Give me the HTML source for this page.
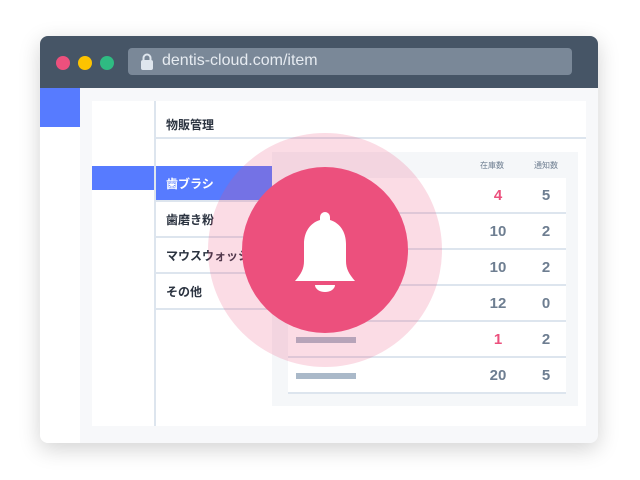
<!DOCTYPE html>
<html><head><meta charset="utf-8"><style>
*{margin:0;padding:0;box-sizing:border-box}
body{width:640px;height:480px;background:#fff;position:relative;overflow:hidden;font-family:"Liberation Sans","Noto Sans CJK JP",sans-serif}
.a{position:absolute}
.win{left:40px;top:36px;width:558px;height:407px;border-radius:8px;overflow:hidden;box-shadow:0 6px 22px rgba(0,0,0,.18);background:#f7f8fa}
.t{font-size:12px;font-weight:bold;color:#2b3340}
.sep{height:2px;background:#dde5ee}
.n{font-size:15px;font-weight:bold;color:#6e7e91;width:40px;text-align:center}
</style></head><body>
<div class="a win">
 <div class="a" style="left:0;top:0;width:558px;height:52px;background:#465566"></div>
 <div class="a" style="left:16px;top:20px;width:14px;height:14px;border-radius:50%;background:#ec507d"></div>
 <div class="a" style="left:38px;top:20px;width:14px;height:14px;border-radius:50%;background:#fdc300"></div>
 <div class="a" style="left:60px;top:20px;width:14px;height:14px;border-radius:50%;background:#2fbb82"></div>
 <div class="a" style="left:88px;top:12px;width:444px;height:27px;border-radius:4px;background:#7a8898"></div>
 <svg class="a" style="left:100px;top:17px" width="14" height="17" viewBox="0 0 14 17"><path d="M3.5 7V5a3.5 3.5 0 0 1 7 0v2" fill="none" stroke="#dfe6ee" stroke-width="2"/><rect x="1" y="7" width="12" height="10" rx="2" fill="#dfe6ee"/></svg>
 <div class="a" style="left:122px;top:16px;font-size:16px;color:#e6ebf1">dentis-cloud.com/item</div>
 <div class="a" style="left:0;top:52px;width:40px;height:355px;background:#fff"></div>
 <div class="a" style="left:0;top:52px;width:40px;height:39px;background:#577bff"></div>
</div>
<div class="a" style="left:92px;top:101px;width:494px;height:325px;background:#fff"></div>
<div class="a" style="left:154px;top:101px;width:2px;height:325px;background:#dde5ee"></div>
<div class="a t" style="left:166px;top:116px">物販管理</div>
<div class="a sep" style="left:156px;top:137px;width:430px"></div>
<div class="a" style="left:92px;top:166px;width:62px;height:24px;background:#577bff"></div>
<div class="a" style="left:156px;top:166px;width:116px;height:34px;background:#577bff"></div>
<div class="a t" style="left:166px;top:175px;color:#fff">歯ブラシ</div>
<div class="a sep" style="left:156px;top:200px;width:116px"></div>
<div class="a t" style="left:166px;top:211px">歯磨き粉</div>
<div class="a sep" style="left:156px;top:236px;width:116px"></div>
<div class="a t" style="left:166px;top:247px">マウスウォッシュ</div>
<div class="a sep" style="left:156px;top:272px;width:116px"></div>
<div class="a t" style="left:166px;top:283px">その他</div>
<div class="a sep" style="left:156px;top:308px;width:116px"></div>
<div class="a" style="left:272px;top:152px;width:306px;height:254px;background:#f5f7f9"></div>
<div class="a" style="left:480px;top:160px;font-size:8px;color:#6e7e91">在庫数</div>
<div class="a" style="left:534px;top:160px;font-size:8px;color:#6e7e91">通知数</div>
<div class="a" style="left:288px;top:178px;width:278px;height:216px;background:#fff"></div>
<div class="a sep" style="left:288px;top:212px;width:278px"></div>
<div class="a sep" style="left:288px;top:248px;width:278px"></div>
<div class="a sep" style="left:288px;top:284px;width:278px"></div>
<div class="a sep" style="left:288px;top:320px;width:278px"></div>
<div class="a sep" style="left:288px;top:356px;width:278px"></div>
<div class="a sep" style="left:288px;top:392px;width:278px"></div>
<div class="a" style="left:296px;top:337px;width:60px;height:6px;background:#aab9c9"></div>
<div class="a" style="left:296px;top:373px;width:60px;height:6px;background:#aab9c9"></div>
<div class="a n" style="left:478px;top:187px;color:#ec507d">4</div><div class="a n" style="left:526px;top:187px">5</div>
<div class="a n" style="left:478px;top:223px">10</div><div class="a n" style="left:526px;top:223px">2</div>
<div class="a n" style="left:478px;top:259px">10</div><div class="a n" style="left:526px;top:259px">2</div>
<div class="a n" style="left:478px;top:295px">12</div><div class="a n" style="left:526px;top:295px">0</div>
<div class="a n" style="left:478px;top:331px;color:#ec507d">1</div><div class="a n" style="left:526px;top:331px">2</div>
<div class="a n" style="left:478px;top:367px">20</div><div class="a n" style="left:526px;top:367px">5</div>
<div class="a" style="left:208px;top:133px;width:234px;height:234px;border-radius:50%;background:rgba(236,80,125,.2)"></div>
<div class="a" style="left:242px;top:167px;width:166px;height:166px;border-radius:50%;background:#ec507d"></div>
<svg class="a" style="left:285px;top:205px" width="80" height="92" viewBox="0 0 80 92">
<path d="M35 12a5 5 0 0 1 10 0v3c10 3 16 12 16 24v17c0 8 3 13 9 20H10c6-7 9-12 9-20V39c0-12 6-21 16-24z" fill="#fff"/>
<path d="M30 80h20a10 7 0 0 1-20 0z" fill="#fff"/>
</svg>
</body></html>
